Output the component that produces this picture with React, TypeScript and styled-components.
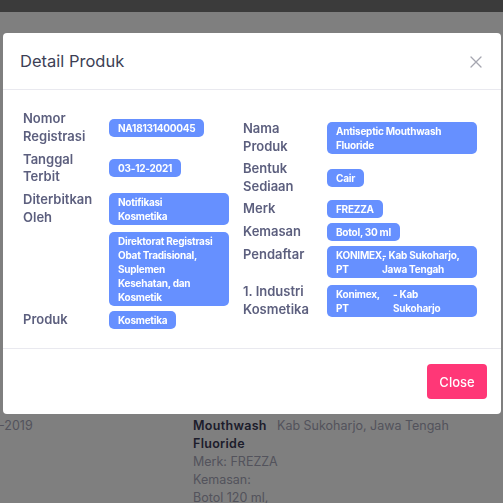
import React from 'react';
import styled, { createGlobalStyle } from 'styled-components';

const GlobalStyle = createGlobalStyle`
  html, body {
    margin: 0;
    padding: 0;
    background: #ffffff;
    font-family: 'Inter', 'Open Sans', sans-serif;
  }
  * {
    box-sizing: border-box;
  }
`;

interface Field {
  label: string;
  value?: string;
  split?: [string, string];
  lead?: number;
}

// line breaks follow the wrapping of the original badges
const leftFields: Field[] = [
  { label: 'Nomor Registrasi', value: 'NA18131400045' },
  { label: 'Tanggal Terbit', value: '03-12-2021' },
  { label: 'Diterbitkan Oleh', value: 'Notifikasi\nKosmetika' },
  {
    label: '',
    value: 'Direktorat Registrasi\nObat Tradisional,\nSuplemen\nKesehatan, dan\nKosmetik',
  },
  { label: 'Produk', value: 'Kosmetika' },
];

const rightFields: Field[] = [
  { label: 'Nama Produk', value: 'Antiseptic Mouthwash\nFluoride' },
  { label: 'Bentuk Sediaan', value: 'Cair' },
  { label: 'Merk', value: 'FREZZA' },
  { label: 'Kemasan', value: 'Botol, 30 ml' },
  { label: 'Pendaftar', split: ['KONIMEX,\nPT', '- Kab Sukoharjo,\nJawa Tengah'], lead: 46 },
  { label: '1. Industri Kosmetika', split: ['Konimex,\nPT', '- Kab\nSukoharjo'], lead: 57 },
];

const CloseIcon = () => (
  <svg width="12" height="12" viewBox="0 0 12 12" fill="none">
    <path d="M1 1L11 11M11 1L1 11" stroke="#a5a6b0" strokeWidth="1.3" strokeLinecap="round" />
  </svg>
);

const App = () => {
  const renderColumn = (fields: Field[], labelWidth: number, valueWidth: number) =>
    fields.map((field, i) => (
      <Row key={i}>
        <Label width={labelWidth}>{field.label}</Label>
        <Value>
          {field.split ? (
            <SplitBadge width={valueWidth}>
              <Part style={{ width: field.lead }}>{field.split[0]}</Part>
              <Part>{field.split[1]}</Part>
            </SplitBadge>
          ) : (
            <Badge
              maxWidth={valueWidth}
              fill={field.value?.includes('\n')}
            >
              {field.value}
            </Badge>
          )}
        </Value>
      </Row>
    ));

  return (
    <>
      <GlobalStyle />
      <Page>
        <TopBar />
        <ListArea>
          <ListRow>
            <DateCell>-2019</DateCell>
            <ProductCell>
              <ProductName>
                Mouthwash
                <br />
                Fluoride
              </ProductName>
              <Muted>Merk: FREZZA</Muted>
              <Muted>Kemasan:</Muted>
              <Muted>Botol 120 ml,</Muted>
            </ProductCell>
            <AddressCell>Kab Sukoharjo, Jawa Tengah</AddressCell>
          </ListRow>
        </ListArea>
      </Page>

      <Backdrop />
      <DialogLayer>
        <Dialog>
          <Header>
            <Title>Detail Produk</Title>
            <IconButton aria-label="close">
              <CloseIcon />
            </IconButton>
          </Header>
          <Body>
            <Column gap={5.5}>{renderColumn(leftFields, 86, 120)}</Column>
            <Column gap={5} offset={10}>{renderColumn(rightFields, 84, 150)}</Column>
          </Body>
          <Footer>
            <CloseButton>Close</CloseButton>
          </Footer>
        </Dialog>
      </DialogLayer>
    </>
  );
};

export default App;

const Page = styled.div`
  height: 503px;
  overflow: hidden;
  background: #ffffff;
`;

const TopBar = styled.div`
  height: 12px;
  background: #767676;
`;

const ListArea = styled.div`
  padding-top: 405px;
`;

const ListRow = styled.div`
  display: flex;
  align-items: flex-start;
  font-size: 12.5px;
  line-height: 18px;
`;

const DateCell = styled.div`
  width: 194px;
  margin-left: -1px;
  color: #a6a6b8;
`;

const ProductCell = styled.div`
  width: 84px;
  display: flex;
  flex-direction: column;
`;

const ProductName = styled.div`
  font-weight: 600;
  color: #3a3a56;
  letter-spacing: 0.3px;
`;

const Muted = styled.div`
  color: #a6a6b8;
  white-space: nowrap;
`;

const AddressCell = styled.div`
  color: #a6a6b8;
  white-space: nowrap;
`;

const Backdrop = styled.div`
  position: fixed;
  inset: 0;
  background: rgba(0, 0, 0, 0.5);
`;

const DialogLayer = styled.div`
  position: fixed;
  inset: 0;
  padding: 33px 2px 0 3px;
`;

const Dialog = styled.div`
  width: 498px;
  background: #ffffff;
  border-radius: 4px;
  display: flex;
  flex-direction: column;
`;

const Header = styled.div`
  height: 57px;
  padding: 0 19px 0 17px;
  display: flex;
  align-items: center;
  justify-content: space-between;
  border-bottom: 1px solid #e9e9ef;
`;

const Title = styled.h5`
  margin: 0;
  font-size: 16.5px;
  font-weight: 400;
  color: #3d3f55;
`;

const IconButton = styled.button`
  border: none;
  background: none;
  padding: 0;
  margin-top: 2px;
  display: flex;
  cursor: pointer;
`;

const Body = styled.div`
  display: grid;
  grid-template-columns: 220px 1fr;
  padding: 20px 20px 19px 20px;
`;

const Column = styled.div<{ gap: number; offset?: number }>`
  display: flex;
  flex-direction: column;
  gap: ${({ gap }) => gap}px;
  padding-top: ${({ offset }) => offset ?? 0}px;
`;

const Row = styled.div`
  display: flex;
  align-items: center;
`;

const Label = styled.div<{ width: number }>`
  width: ${({ width }) => width}px;
  flex-shrink: 0;
  align-self: flex-start;
  font-size: 13px;
  line-height: 17.5px;
  font-weight: 600;
  color: #5c5f7e;
`;

const Value = styled.div`
  display: flex;
`;

const badgeText = `
  padding: 2px 9px;
  border-radius: 5px;
  background: #6690ff;
  color: #ffffff;
  font-size: 10px;
  letter-spacing: -0.25px;
  line-height: 14px;
  font-weight: 700;
  white-space: pre-line;
`;

const Badge = styled.span<{ maxWidth: number; fill?: boolean }>`
  ${badgeText}
  display: inline-block;
  max-width: ${({ maxWidth }) => maxWidth}px;
  width: ${({ fill, maxWidth }) => (fill ? `${maxWidth}px` : 'auto')};
`;

const SplitBadge = styled.div<{ width: number }>`
  ${badgeText}
  display: flex;
  width: ${({ width }) => width}px;
`;

const Part = styled.span`
  flex-shrink: 0;
  &:last-child {
    flex: 1;
  }
`;

const Footer = styled.div`
  display: flex;
  justify-content: flex-end;
  padding: 15px 14px 15px;
  border-top: 1px solid #e9e9ef;
`;

const CloseButton = styled.button`
  width: 60px;
  height: 35px;
  border: none;
  border-radius: 4px;
  background: #ff3777;
  color: #ffffff;
  font-family: inherit;
  font-size: 13px;
  font-weight: 500;
  cursor: pointer;
`;
